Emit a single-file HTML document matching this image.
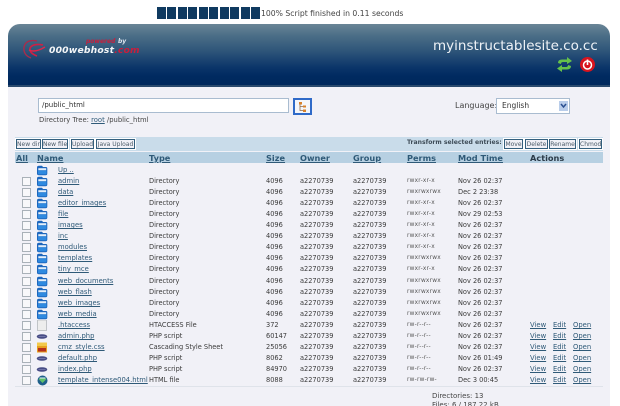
<!DOCTYPE html>
<html><head><meta charset="utf-8"><title>File Manager</title>
<style>
html,body{margin:0;padding:0;background:#fff;width:620px;height:406px;overflow:hidden}
body{position:relative;font-family:"DejaVu Sans","Liberation Sans",sans-serif;color:#333;font-size:7px}
#w{left:0;top:0;width:620px;height:406px;overflow:hidden;filter:blur(.3px)}
div,span,a,svg{position:absolute;white-space:nowrap}
a{color:#2f5a78;text-decoration:underline}
#main{left:8px;top:24px;width:602px;height:382px;background:#f1f1f7;border-radius:12px 12px 0 0;overflow:hidden}
#hd{left:8px;top:24px;width:602px;height:61px;background:linear-gradient(#6a8596 0,#4a6d86 12px,#2c5378 28px,#0a3468 44px,#002a60 52px,#00285c 61px);border-bottom:2px solid #2a4a6e;border-radius:12px 12px 0 0}
.b{height:12px;width:9px;top:7px;background:#0f3a60}
.tb{top:139px;height:10px;line-height:9px;border:1px solid #345f7d;background:#f1f1f7;font-size:6px;text-align:center;color:#4a5a68;box-sizing:border-box;outline:1px solid #fff}
.h{top:152px;font-weight:bold;font-size:8.2px;line-height:12px;color:#2f5a78;text-decoration:underline}
.r{left:0;width:620px;height:11px;line-height:11px;font-size:6.6px;color:#3a3a3a}
.r .c{position:absolute;left:22px;top:1px;width:9px;height:9px;border:1px solid #a9b1b8;background:#f8f8fa;box-sizing:border-box}
.r svg{left:36px;top:0;width:12px;height:11px}
.r a,.r span{top:0;line-height:11px}
.n{left:58px;font-size:6.8px}
.t{left:149px}.s{left:266px}.o{left:300px}.g{left:353px}.m{left:458px}
.p{left:407px;font-size:5.8px;letter-spacing:.25px;color:#555}
.v{left:530px;font-size:6.8px}.e{left:553px;font-size:6.8px}.q{left:573px;font-size:6.8px}
</style></head><body>
<svg width="0" height="0" style="left:0;top:0"><defs>
<symbol id="f" viewBox="0 0 12 11"><path d="M1 2.500Q1 .8 3 .8H6L7 2H10Q11.300 2 11.300 3.500V8.500Q11.300 10.300 9.500 10.300H3Q1 10.300 1 8.500Z" fill="#1c66bd"/><path d="M2.300 3.200H10.200V5.200H2.300Z" fill="#e3effa"/><path d="M2 5.500H10.500V9.300H2Z" fill="#2f8ae0"/></symbol>
<symbol id="ph" viewBox="0 0 12 11"><ellipse cx="6" cy="5.500" rx="5.300" ry="2.300" fill="#474c85"/><path d="M2.500 5.500H9.500" stroke="#8a8fc0" stroke-width=".6"/></symbol>
</defs></svg>
<div id="w">
<div class="b" style="left:157px"></div><div class="b" style="left:167px"></div><div class="b" style="left:178px"></div><div class="b" style="left:188px"></div><div class="b" style="left:199px"></div><div class="b" style="left:209px"></div><div class="b" style="left:220px"></div><div class="b" style="left:230px"></div><div class="b" style="left:241px"></div><div class="b" style="left:251px"></div>
<span style="left:261px;top:8px;font-size:7.7px;line-height:11px;color:#444">100% Script finished in 0.11 seconds</span>

<div id="main"></div>
<div id="hd"></div>

<svg style="left:21px;top:38px" width="27" height="24" viewBox="0 0 27 24"><path d="M16 3Q5 1 3 9Q2 17 10 20" fill="none" stroke="#a82c4c" stroke-width="1.400"/><path d="M22 7Q12 5 9 10Q8 15 16 18" fill="none" stroke="#d01f44" stroke-width="1.600"/><path d="M8 12Q14 15 24 9" fill="none" stroke="#e0254a" stroke-width="1.400"/></svg>
<span style="left:86px;top:38px;font:italic bold 6px/7px 'DejaVu Sans',sans-serif;color:#c81e3c">powered</span>
<span style="left:118px;top:38px;font:italic bold 6px/7px 'DejaVu Sans',sans-serif;color:#dfe6ee">by</span>
<span style="left:49px;top:45px;font:italic bold 9.200px/12px 'DejaVu Sans',sans-serif;letter-spacing:.2px;color:#f4f6f8">000webhost<span style="position:static;color:#c81e3c">.com</span></span>

<span style="left:433px;top:37px;font-size:13.500px;line-height:18px;color:#eef2f6">myinstructablesite.co.cc</span>
<svg style="left:556px;top:56px" width="17" height="17" viewBox="0 0 17 17"><path d="M2 7Q2 3.500 6 3.500H11V1L16 5 11 8V6H7Q5 6 5 8Z" fill="#66c24a"/><path d="M15 10Q15 13.500 11 13.500H6V16L1 12.500 6 9V11H10Q12 11 12 9Z" fill="#66c24a"/></svg>
<svg style="left:579px;top:56px" width="17" height="17" viewBox="0 0 17 17"><circle cx="8.500" cy="8.500" r="7.500" fill="#d8141e"/><circle cx="8.500" cy="9" r="4" fill="none" stroke="#fff" stroke-width="1.500"/><path d="M8.500 3.500V9" stroke="#fff" stroke-width="1.600"/></svg>

<div style="left:38px;top:98px;width:251px;height:15px;background:#fff;border:1px solid #a9bcd0;box-sizing:border-box;font-size:7px;line-height:13px;text-indent:3px;color:#333">/public_html</div>
<div style="left:293px;top:98px;width:19px;height:17px;background:#f4f6fa;border:2px solid #2f6ac8;box-sizing:border-box"></div>
<svg style="left:298px;top:102px" width="9" height="10" viewBox="0 0 9 10"><path d="M2 1V8.500H6M2 4.500H6" fill="none" stroke="#8a6a4a" stroke-width=".8"/><path d="M1 0H4V2.500H1ZM5 3.500H8V5.500H5ZM5 7.500H8V10H5Z" fill="#d9822b"/></svg>
<span style="left:39px;top:115px;font-size:6.800px;line-height:11px;color:#444">Directory Tree: <a style="position:static">root</a> /public_html</span>

<span style="left:455px;top:100px;font-size:8px;line-height:11px;color:#444">Language:</span>
<div style="left:496px;top:98px;width:74px;height:16px;background:#fff;border:1px solid #a9bcd0;box-sizing:border-box;font-size:7.500px;line-height:13px;text-indent:5px;color:#333">English</div>
<div style="left:559px;top:101px;width:9px;height:10px;background:#b9cdea"></div>
<svg style="left:560px;top:103px" width="7" height="6" viewBox="0 0 7 6"><path d="M1 1L3.500 4 6 1" fill="none" stroke="#2a4f90" stroke-width="1.500"/></svg>

<div style="left:15px;top:137px;width:588px;height:14px;background:#c9dcea"></div>
<div style="left:15px;top:152px;width:588px;height:11px;background:#b7d0e2"></div>
<div style="left:15px;top:386px;width:588px;height:1px;background:#dfe3ea"></div>

<div class="tb" style="left:16px;width:25px">New dir</div>
<div class="tb" style="left:42px;width:26px">New file</div>
<div class="tb" style="left:71px;width:23px">Upload</div>
<div class="tb" style="left:96px;width:39px">Java Upload</div>
<span style="left:407px;top:138px;font-size:6.100px;line-height:10px;font-weight:bold;color:#3e4c58">Transform selected entries:</span>
<div class="tb" style="left:504px;width:19px">Move</div>
<div class="tb" style="left:525px;width:23px">Delete</div>
<div class="tb" style="left:549px;width:27px">Rename</div>
<div class="tb" style="left:579px;width:23px">Chmod</div>

<span class="h" style="left:16px">All</span>
<span class="h" style="left:37px">Name</span>
<span class="h" style="left:149px">Type</span>
<span class="h" style="left:266px">Size</span>
<span class="h" style="left:300px">Owner</span>
<span class="h" style="left:353px">Group</span>
<span class="h" style="left:407px">Perms</span>
<span class="h" style="left:458px">Mod Time</span>
<span class="h" style="left:530px;color:#2a3a48;text-decoration:none">Actions</span>

<div class="r" style="top:165px"><svg><use href="#f"/></svg><a class="n">Up ..</a></div>
<div class="r" style="top:176px"><i class="c"></i><svg><use href="#f"/></svg><a class="n">admin</a><span class="t">Directory</span><span class="s">4096</span><span class="o">a2270739</span><span class="g">a2270739</span><span class="p">rwxr-xr-x</span><span class="m">Nov 26 02:37</span></div>
<div class="r" style="top:187px"><i class="c"></i><svg><use href="#f"/></svg><a class="n">data</a><span class="t">Directory</span><span class="s">4096</span><span class="o">a2270739</span><span class="g">a2270739</span><span class="p">rwxrwxrwx</span><span class="m">Dec 2 23:38</span></div>
<div class="r" style="top:198px"><i class="c"></i><svg><use href="#f"/></svg><a class="n">editor_images</a><span class="t">Directory</span><span class="s">4096</span><span class="o">a2270739</span><span class="g">a2270739</span><span class="p">rwxr-xr-x</span><span class="m">Nov 26 02:37</span></div>
<div class="r" style="top:209px"><i class="c"></i><svg><use href="#f"/></svg><a class="n">file</a><span class="t">Directory</span><span class="s">4096</span><span class="o">a2270739</span><span class="g">a2270739</span><span class="p">rwxr-xr-x</span><span class="m">Nov 29 02:53</span></div>
<div class="r" style="top:220px"><i class="c"></i><svg><use href="#f"/></svg><a class="n">images</a><span class="t">Directory</span><span class="s">4096</span><span class="o">a2270739</span><span class="g">a2270739</span><span class="p">rwxr-xr-x</span><span class="m">Nov 26 02:37</span></div>
<div class="r" style="top:231px"><i class="c"></i><svg><use href="#f"/></svg><a class="n">inc</a><span class="t">Directory</span><span class="s">4096</span><span class="o">a2270739</span><span class="g">a2270739</span><span class="p">rwxr-xr-x</span><span class="m">Nov 26 02:37</span></div>
<div class="r" style="top:242px"><i class="c"></i><svg><use href="#f"/></svg><a class="n">modules</a><span class="t">Directory</span><span class="s">4096</span><span class="o">a2270739</span><span class="g">a2270739</span><span class="p">rwxr-xr-x</span><span class="m">Nov 26 02:37</span></div>
<div class="r" style="top:253px"><i class="c"></i><svg><use href="#f"/></svg><a class="n">templates</a><span class="t">Directory</span><span class="s">4096</span><span class="o">a2270739</span><span class="g">a2270739</span><span class="p">rwxrwxrwx</span><span class="m">Nov 26 02:37</span></div>
<div class="r" style="top:264px"><i class="c"></i><svg><use href="#f"/></svg><a class="n">tiny_mce</a><span class="t">Directory</span><span class="s">4096</span><span class="o">a2270739</span><span class="g">a2270739</span><span class="p">rwxr-xr-x</span><span class="m">Nov 26 02:37</span></div>
<div class="r" style="top:276px"><i class="c"></i><svg><use href="#f"/></svg><a class="n">web_documents</a><span class="t">Directory</span><span class="s">4096</span><span class="o">a2270739</span><span class="g">a2270739</span><span class="p">rwxrwxrwx</span><span class="m">Nov 26 02:37</span></div>
<div class="r" style="top:287px"><i class="c"></i><svg><use href="#f"/></svg><a class="n">web_flash</a><span class="t">Directory</span><span class="s">4096</span><span class="o">a2270739</span><span class="g">a2270739</span><span class="p">rwxrwxrwx</span><span class="m">Nov 26 02:37</span></div>
<div class="r" style="top:298px"><i class="c"></i><svg><use href="#f"/></svg><a class="n">web_images</a><span class="t">Directory</span><span class="s">4096</span><span class="o">a2270739</span><span class="g">a2270739</span><span class="p">rwxrwxrwx</span><span class="m">Nov 26 02:37</span></div>
<div class="r" style="top:309px"><i class="c"></i><svg><use href="#f"/></svg><a class="n">web_media</a><span class="t">Directory</span><span class="s">4096</span><span class="o">a2270739</span><span class="g">a2270739</span><span class="p">rwxrwxrwx</span><span class="m">Nov 26 02:37</span></div>
<div class="r" style="top:320px"><i class="c"></i><svg viewBox="0 0 12 11"><path d="M1.500 0H10.500V10.500H1.500Z" fill="#ededed" stroke="#b4b8bc" stroke-width=".8"/></svg><a class="n">.htaccess</a><span class="t">HTACCESS File</span><span class="s">372</span><span class="o">a2270739</span><span class="g">a2270739</span><span class="p">rw-r--r--</span><span class="m">Nov 26 02:37</span><a class="v">View</a><a class="e">Edit</a><a class="q">Open</a></div>
<div class="r" style="top:331px"><i class="c"></i><svg><use href="#ph"/></svg><a class="n">admin.php</a><span class="t">PHP script</span><span class="s">60147</span><span class="o">a2270739</span><span class="g">a2270739</span><span class="p">rw-r--r--</span><span class="m">Nov 26 02:37</span><a class="v">View</a><a class="e">Edit</a><a class="q">Open</a></div>
<div class="r" style="top:342px"><i class="c"></i><svg viewBox="0 0 12 11"><path d="M1 .5H11V10.500H1Z" fill="#e8a020"/><path d="M1 .5H11V4H1Z" fill="#f2c94c"/><path d="M2 6H10V9.500H2Z" fill="#b5301c"/></svg><a class="n">cmz_style.css</a><span class="t">Cascading Style Sheet</span><span class="s">25056</span><span class="o">a2270739</span><span class="g">a2270739</span><span class="p">rw-r--r--</span><span class="m">Nov 26 02:37</span><a class="v">View</a><a class="e">Edit</a><a class="q">Open</a></div>
<div class="r" style="top:353px"><i class="c"></i><svg><use href="#ph"/></svg><a class="n">default.php</a><span class="t">PHP script</span><span class="s">8062</span><span class="o">a2270739</span><span class="g">a2270739</span><span class="p">rw-r--r--</span><span class="m">Nov 26 01:49</span><a class="v">View</a><a class="e">Edit</a><a class="q">Open</a></div>
<div class="r" style="top:364px"><i class="c"></i><svg><use href="#ph"/></svg><a class="n">index.php</a><span class="t">PHP script</span><span class="s">84970</span><span class="o">a2270739</span><span class="g">a2270739</span><span class="p">rw-r--r--</span><span class="m">Nov 26 02:37</span><a class="v">View</a><a class="e">Edit</a><a class="q">Open</a></div>
<div class="r" style="top:375px"><i class="c"></i><svg viewBox="0 0 12 11"><circle cx="6.500" cy="5.500" r="5" fill="#1f5f8a"/><path d="M2.500 4Q6.500 2 10.500 4L6.500 8Z" fill="#5fc06a"/><path d="M3.500 3H9.500" stroke="#e8f4ff" stroke-width="1"/></svg><a class="n">template_intense004.html</a><span class="t">HTML file</span><span class="s">8088</span><span class="o">a2270739</span><span class="g">a2270739</span><span class="p">rw-rw-rw-</span><span class="m">Dec 3 00:45</span><a class="v">View</a><a class="e">Edit</a><a class="q">Open</a></div>

<span style="left:432px;top:392px;font-size:7px;line-height:9px;color:#444">Directories: 13</span>
<span style="left:432px;top:401px;font-size:7px;line-height:9px;color:#444">Files: 6 / 187.22 kB</span>
</div>
</body></html>
